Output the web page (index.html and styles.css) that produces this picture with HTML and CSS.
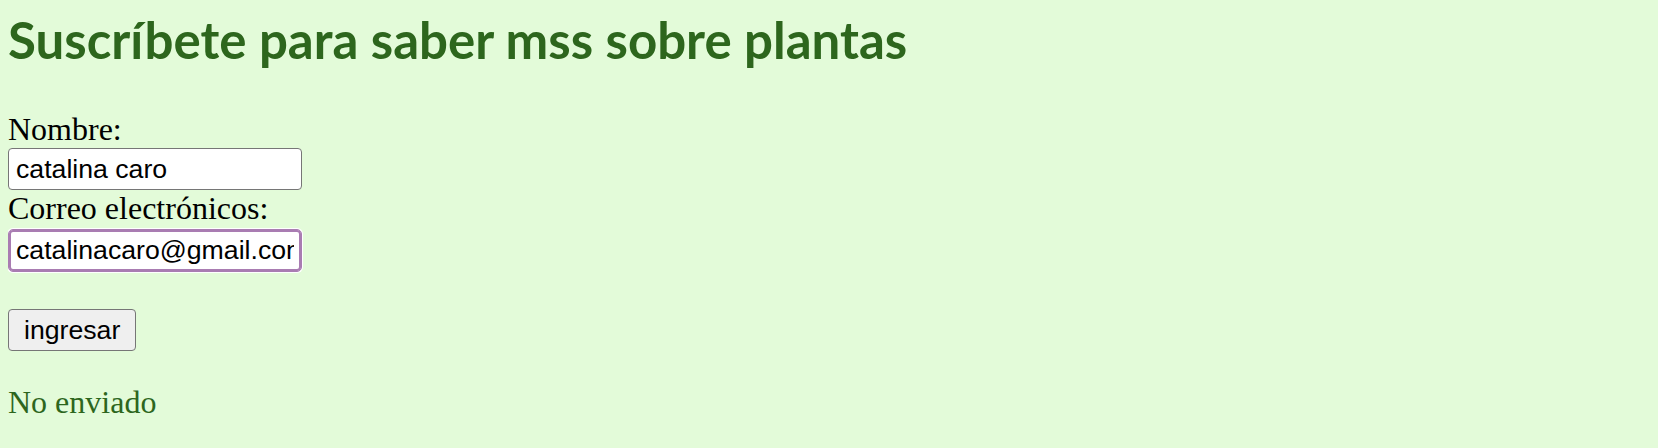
FILE: index.html
```html
<!DOCTYPE html>
<html lang="es">
<head>
<meta charset="utf-8">
<title>Suscríbete</title>
<link rel="stylesheet" href="styles.css">
</head>
<body>
<h1 class="title">Suscríbete para saber mss sobre plantas</h1>
<form class="form">
  <label class="label" for="nombre">Nombre:</label>
  <input class="field" id="nombre" type="text" value="catalina caro">
  <label class="label" for="correo">Correo electrónicos:</label>
  <input class="field field--focus" id="correo" type="text" value="catalinacaro@gmail.com">
  <button class="btn" type="button">ingresar</button>
</form>
<p class="status">No enviado</p>
</body>
</html>
```

FILE: styles.css
```css
html, body {
  background: #e3fbd9;
}
body {
  margin: 8px;
  font-family: "Liberation Serif", "Times New Roman", serif;
  font-size: 32px;
  color: #000;
}
.title {
  margin: 2px 0 0;
  font-family: "Lato", "Open Sans", sans-serif;
  font-weight: 700;
  font-size: 51px;
  line-height: 60px;
  color: #2d661d;
}
.form {
  display: flex;
  flex-direction: column;
  align-items: flex-start;
  margin-top: 41px;
}
.label {
  display: block;
  line-height: 36px;
}
.field {
  box-sizing: border-box;
  width: 294px;
  height: 42px;
  margin: 1px 0 0;
  padding: 0 7px;
  border: 1px solid #767676;
  border-radius: 4px;
  background: #fff;
  font-family: "Liberation Sans", Arial, sans-serif;
  font-size: 26.67px;
  color: #000;
  outline: none;
}
.field--focus {
  margin-top: 3px;
  height: 43px;
  border-color: #a97cb2;
  border-radius: 5px;
  box-shadow: inset 0 0 0 2px #a97cb2, 0 0 0 1px #fff;
}
.btn {
  box-sizing: border-box;
  height: 42px;
  margin-top: 37px;
  padding: 0 15px;
  border: 1px solid #767676;
  border-radius: 4px;
  background: #efefef;
  font-family: "Liberation Sans", Arial, sans-serif;
  font-size: 26.67px;
  color: #000;
}
.status {
  margin: 33px 0 0;
  line-height: 36px;
  color: #2d661d;
}
```
